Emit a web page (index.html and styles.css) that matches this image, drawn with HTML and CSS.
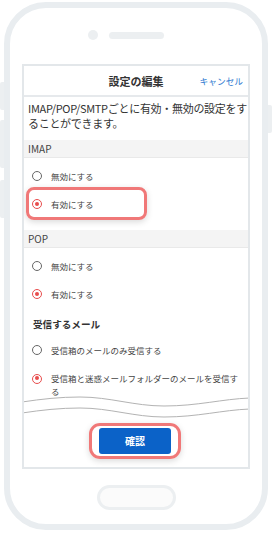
FILE: index.html
```html
<!DOCTYPE html>
<html>
    <head>
        <link rel="stylesheet" href="styles.css">
    </head>
    <body>
        <div class="page">
            <div class="side-btn left b1"></div>
            <div class="side-btn left b2"></div>
            <div class="side-btn left b3"></div>
            <div class="side-btn right b4"></div>

            <div class="phone">
                <div class="top-bar">
                    <div class="camera"></div>
                    <div class="speaker"></div>
                    <div class="spacer"></div>
                </div>

                <div class="screen">
                    <div class="header">
                        <div class="title">設定の編集</div>
                        <div class="cancel">キャンセル</div>
                    </div>

                    <p class="desc">IMAP/POP/SMTPごとに有効・無効の設定をす<br>ることができます。</p>

                    <div class="section-head">IMAP</div>
                    <div class="options">
                        <div class="option">
                            <span class="radio"></span>
                            <span class="label">無効にする</span>
                        </div>
                        <div class="option marked">
                            <span class="radio checked"></span>
                            <span class="label">有効にする</span>
                        </div>
                    </div>

                    <div class="section-head">POP</div>
                    <div class="options pop">
                        <div class="option">
                            <span class="radio"></span>
                            <span class="label">無効にする</span>
                        </div>
                        <div class="option">
                            <span class="radio checked"></span>
                            <span class="label">有効にする</span>
                        </div>
                    </div>

                    <div class="sub-title">受信するメール</div>
                    <div class="options mail">
                        <div class="option">
                            <span class="radio"></span>
                            <span class="label">受信箱のメールのみ受信する</span>
                        </div>
                        <div class="option long">
                            <span class="radio checked"></span>
                            <span class="label">受信箱と迷惑メールフォルダーのメールを受信する</span>
                        </div>
                    </div>

                    <svg class="wave" width="228" height="24" viewBox="0 0 228 24">
                        <path d="M0 6 C20 3, 38 1, 58 1 C88 1, 112 10, 142 10 C176 10, 200 3, 228 2" />
                        <path d="M0 17 C20 14, 38 12, 58 12 C88 12, 112 21, 142 21 C176 21, 200 14, 228 13" />
                    </svg>

                    <div class="footer">
                        <div class="btn-ring">
                            <div class="btn">確認</div>
                        </div>
                    </div>
                </div>

                <div class="home"></div>
            </div>
        </div>
    </body>
</html>
```

FILE: styles.css
```css
body, html {
    margin: 0;
    padding: 0;
    background-color: white;
    font-family: "Noto Sans CJK JP", "Noto Sans", sans-serif;
    color: #333;
}

.page {
    position: relative;
    width: 272px;
    height: 534px;
    overflow: hidden;
}

.side-btn {
    position: absolute;
    width: 4px;
    background-color: #eceff1;
}

.side-btn.left {
    left: 0;
    border-radius: 2px 0 0 2px;
}

.side-btn.right {
    right: 0;
    border-radius: 0 2px 2px 0;
}

.b1 { top: 82px; height: 28px; }
.b2 { top: 120px; height: 48px; }
.b3 { top: 180px; height: 38px; }
.b4 { top: 105px; height: 28px; }

.phone {
    margin: 2px 4px;
    width: 264px;
    height: 528px;
    box-sizing: border-box;
    border: 6px solid #e9edf0;
    border-radius: 42px;
    display: flex;
    flex-direction: column;
    align-items: center;
}

.top-bar {
    margin-top: 22px;
    height: 10px;
    display: flex;
    align-items: center;
    gap: 11px;
}

.camera {
    width: 10px;
    height: 10px;
    border-radius: 50%;
    background-color: #eceff1;
}

.speaker {
    width: 55px;
    height: 7px;
    border-radius: 4px;
    background-color: #eceff1;
}

.spacer {
    width: 10px;
}

.screen {
    margin-top: 24px;
    width: 228px;
    height: 405px;
    box-sizing: border-box;
    border: 2px solid #e3e7ea;
    display: flex;
    flex-direction: column;
    overflow: hidden;
}

.header {
    position: relative;
    height: 29px;
    border-bottom: 2px solid #e6e9ec;
    display: flex;
    align-items: center;
    justify-content: center;
}

.title {
    font-size: 11px;
    font-weight: bold;
    color: #333;
}

.cancel {
    position: absolute;
    right: 5px;
    top: 9px;
    font-size: 8.7px;
    color: #2a78d0;
}

.desc {
    margin: 0;
    padding: 4px 0 9px 4px;
    font-size: 11px;
    line-height: 15px;
    letter-spacing: -0.3px;
    white-space: nowrap;
    color: #333;
}

.section-head {
    height: 17px;
    line-height: 17px;
    padding-left: 4px;
    font-size: 10px;
    color: #444;
    background-color: #f4f4f4;
    border-bottom: 1px solid #e9e9e9;
}

.options {
    padding: 4px 0 12px;
}

.options.pop {
    padding-bottom: 0;
}

.options.mail {
    padding: 0;
}

.option {
    position: relative;
    display: flex;
    align-items: center;
    height: 28px;
    padding-left: 8px;
}

.option.long {
    height: auto;
    align-items: flex-start;
    padding-top: 8px;
}

.option.long .label {
    line-height: 13px;
    padding-right: 4px;
}

.option.long .radio {
    margin-top: 1.5px;
}

.option.marked::after {
    content: "";
    position: absolute;
    left: 2px;
    top: -3px;
    width: 121px;
    height: 33px;
    box-sizing: border-box;
    border: 3px solid #f07878;
    border-radius: 8px;
    box-shadow: 0 2px 6px rgba(0,0,0,0.15);
}

.radio {
    flex: none;
    width: 10px;
    height: 10px;
    box-sizing: border-box;
    border: 1.5px solid #666;
    border-radius: 50%;
    position: relative;
}

.radio.checked {
    border-color: #e84c4c;
}

.radio.checked::after {
    content: "";
    position: absolute;
    left: 1.5px;
    top: 1.5px;
    width: 4px;
    height: 4px;
    border-radius: 50%;
    background-color: #e84c4c;
}

.label {
    margin-left: 9px;
    font-size: 8.5px;
    color: #444;
}

.sub-title {
    padding: 8px 0 4px 9px;
    font-size: 9.6px;
    line-height: 16px;
    font-weight: bold;
    color: #333;
}

.wave {
    display: block;
    margin-top: -2px;
    margin-left: -2px;
    fill: none;
    stroke: #b3b3b3;
    stroke-width: 1;
}

.footer {
    margin-top: auto;
    padding-bottom: 8px;
    display: flex;
    justify-content: center;
}

.btn-ring {
    padding: 2px 7px;
    border: 3px solid #f07878;
    border-radius: 11px;
    box-shadow: 0 2px 6px rgba(0,0,0,0.15);
    margin-left: -2px;
}

.btn {
    width: 72px;
    height: 26px;
    line-height: 26px;
    text-align: center;
    background-color: #0b62c8;
    border-radius: 3px;
    color: white;
    font-size: 10px;
    font-weight: bold;
}

.home {
    margin-top: 16px;
    width: 79px;
    height: 25px;
    box-sizing: border-box;
    border: 3px solid #eceff1;
    border-radius: 13px;
    background-color: #fbfbfb;
}
```
